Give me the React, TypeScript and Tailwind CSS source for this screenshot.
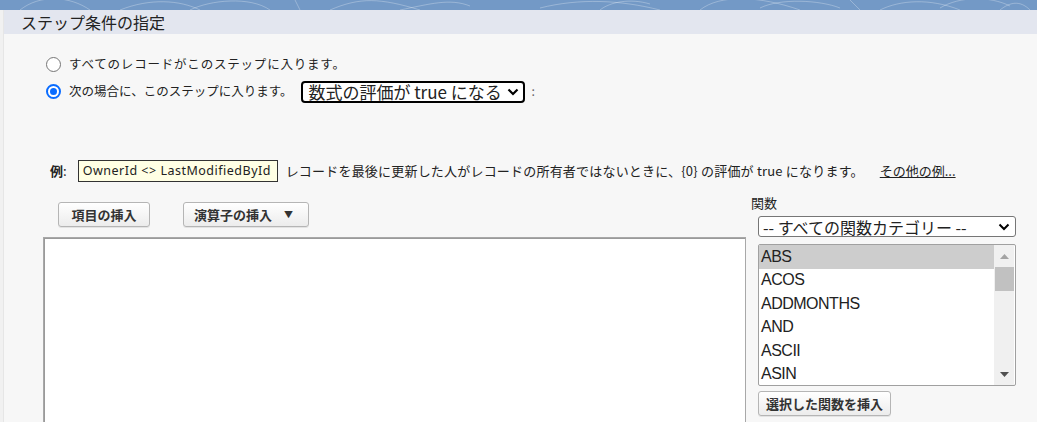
import React from "react";

const jp = { fontFamily: '"Noto Sans CJK JP", "Noto Sans", sans-serif' };
const arial = { fontFamily: '"Liberation Sans", Arial, sans-serif' };

function Band() {
  return (
    <div className="h-[10px] bg-[#7399c6] overflow-hidden">
      <svg width="1037" height="10" viewBox="0 0 1037 10">
        <g fill="none" stroke="rgba(255,255,255,0.28)" strokeWidth="1">
          <path d="M20 10 C40 -6 70 -4 90 10" />
          <path d="M120 10 C150 -2 180 0 200 10" />
          <path d="M190 10 C210 0 250 -4 270 10" />
          <path d="M330 10 C360 -3 380 -2 420 10" />
          <path d="M400 10 C430 4 450 -2 470 6" />
          <path d="M540 8 C580 -2 620 0 660 10" />
          <path d="M600 10 C610 2 630 -2 650 4" />
          <path d="M700 10 C720 -6 760 -4 800 10" />
          <path d="M760 8 C780 -2 820 0 840 8" />
          <path d="M880 10 C900 0 930 -2 960 10" />
          <path d="M940 8 C960 -4 990 -4 1010 6" />
          <path d="M1000 10 C1010 2 1020 0 1030 10" />
          <path d="M850 0 L860 10" />
          <path d="M295 0 L300 10" />
        </g>
      </svg>
    </div>
  );
}

function Radio({ checked }: { checked?: boolean }) {
  return checked ? (
    <span className="w-[15px] h-[15px] rounded-full border-[2px] border-[#0a6cff] bg-white flex items-center justify-center">
      <span className="w-[7px] h-[7px] rounded-full bg-[#0a6cff]" />
    </span>
  ) : (
    <span className="w-[15px] h-[15px] rounded-full border border-[#767676] bg-white" />
  );
}

function Btn({ children, className = "" }: { children: React.ReactNode; className?: string }) {
  return (
    <div
      className={
        "h-[25px] flex items-center border border-[#b5b5b5] rounded-[3px] bg-gradient-to-b from-white to-[#ececec] text-[13px] font-bold text-[#333] shadow-[0_1px_0_rgba(0,0,0,0.08)] " +
        className
      }
      style={jp}
    >
      {children}
    </div>
  );
}

export default function App() {
  const items = ["ABS", "ACOS", "ADDMONTHS", "AND", "ASCII", "ASIN"];
  return (
    <div className="w-[1037px] h-[422px] overflow-hidden bg-[#f7f7f7] text-[#222]" style={jp}>
      <Band />
      <div className="flex h-[412px]">
        <div className="w-[4px] bg-[#f1f1f1] border-r border-[#e6e6e6]" />
        <div className="flex-1 flex flex-col">
          <div className="h-[30px] bg-[#e3e6ef] flex items-center pl-[17px] text-[16px] text-[#222]">
            ステップ条件の指定
          </div>
          <div className="flex-1 bg-[#f7f7f7]">
            <div className="pt-[23px] pl-[42px] flex flex-col gap-[12px] text-[12.5px]">
              <div className="flex items-center h-[15px] gap-[8px]">
                <Radio />
                <span className="tracking-[0.8px]">すべてのレコードがこのステップに入ります。</span>
              </div>
              <div className="flex items-center h-[15px] gap-[8px]">
                <Radio checked />
                <span>次の場合に、このステップに入ります。</span>
                <div className="ml-[1px] h-[22px] w-[224px] border-[2px] border-black rounded-[4px] bg-white flex items-center pl-[5px] pr-[4px] text-[17px] justify-between">
                  <span className="leading-none">数式の評価が true になる</span>
                  <svg width="12" height="8" viewBox="0 0 12 8">
                    <path d="M1.5 1.5 L6 6 L10.5 1.5" fill="none" stroke="#000" strokeWidth="2.2" />
                  </svg>
                </div>
                <span className="ml-[-2px] text-[#666]">:</span>
              </div>
            </div>
            <div className="mt-[61px] pl-[46px] flex items-center text-[13px]">
              <span className="font-bold text-[13px]">例</span>
              <span>:</span>
              <span
                className="ml-[11px] h-[22px] w-[200px] border border-[#333] bg-[#ffffe4] flex items-center pl-[4px] text-[12.5px] tracking-[0.5px]"
                style={{ fontFamily: '"Noto Sans", sans-serif' }}
              >
                OwnerId &lt;&gt; LastModifiedById
              </span>
              <span className="ml-[8px] tracking-[0.2px]">レコードを最後に更新した人がレコードの所有者ではないときに、{"{0}"} の評価が true になります。</span>
              <span className="ml-[16px] underline">その他の例...</span>
            </div>
            <div className="flex mt-[13px]">
              <div className="ml-[39px] w-[703px] flex flex-col">
                <div className="flex gap-[33px] pl-[15px] pt-[7px]">
                  <Btn className="w-[92px] justify-center">項目の挿入</Btn>
                  <Btn className="w-[126px] pl-[10px] gap-[12px]">
                    <span>演算子の挿入</span>
                    <span className="text-[9px]">▼</span>
                  </Btn>
                </div>
                <div className="mt-[10px] h-[200px] bg-white border border-[#a8a8a8] shadow-[inset_1px_1px_0_#9a9a9a]" />
              </div>
              <div className="ml-[4px] flex flex-col">
                <div className="text-[13px] leading-[16px] pl-[1px]">関数</div>
                <div className="ml-[8px] mt-[5px] h-[21px] w-[258px] border border-[#767676] rounded-[3px] bg-white flex items-center justify-between pl-[4px] pr-[5px] text-[16px]">
                  <span className="leading-none">-- すべての関数カテゴリー --</span>
                  <svg width="12" height="8" viewBox="0 0 12 8">
                    <path d="M1.5 1.5 L6 6 L10.5 1.5" fill="none" stroke="#000" strokeWidth="2" />
                  </svg>
                </div>
                <div className="ml-[8px] mt-[7px] h-[142px] w-[258px] border border-[#a0a0a0] rounded-[2px] bg-white flex overflow-hidden">
                  <div className="flex-1 flex flex-col" style={arial}>
                    {items.map((it, i) => (
                      <div
                        key={it}
                        className={
                          "h-[23.5px] flex items-center pl-[2px] text-[16px] tracking-[-0.5px] " +
                          (i === 0 ? "bg-[#cdcdcd]" : "")
                        }
                      >
                        {it}
                      </div>
                    ))}
                  </div>
                  <div className="w-[20px] bg-[#f0f0f0] flex flex-col items-center mr-[1px]">
                    <div className="h-[22px] flex items-center justify-center">
                      <svg width="9" height="5" viewBox="0 0 9 5">
                        <path d="M0 5 L4.5 0 L9 5 Z" fill="#a3a3a3" />
                      </svg>
                    </div>
                    <div className="w-[19px] h-[24px] bg-[#c1c1c1]" />
                    <div className="flex-1" />
                    <div className="h-[22px] flex items-center justify-center">
                      <svg width="9" height="5" viewBox="0 0 9 5">
                        <path d="M0 0 L4.5 5 L9 0 Z" fill="#505050" />
                      </svg>
                    </div>
                  </div>
                </div>
                <Btn className="ml-[8px] mt-[5px] w-[133px] justify-center">選択した関数を挿入</Btn>
              </div>
            </div>
          </div>
        </div>
      </div>
    </div>
  );
}
